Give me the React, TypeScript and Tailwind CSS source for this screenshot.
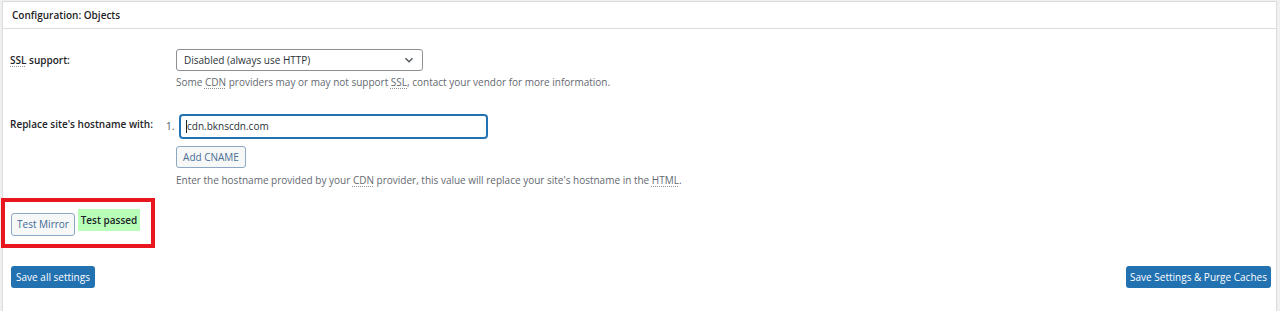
import React from "react";

const font = { fontFamily: '"Open Sans", "Noto Sans", Arial, sans-serif' };

function Abbr({ children }: { children: React.ReactNode }) {
  return (
    <span className="underline decoration-dotted decoration-[#8c8f94] underline-offset-2">
      {children}
    </span>
  );
}

export default function App() {
  return (
    <div
      className="relative w-full h-[311px] overflow-hidden bg-[#f0f0f1] pl-[2px] pr-[3px] pt-[1px] text-[10px] text-[#1d2327] whitespace-nowrap"
      style={font}
    >
      <div className="h-[340px] bg-white border border-[#dcdcde]">
        <div className="h-[27px] border-b border-[#dcdcde] pl-[9px] flex items-center">
          <span className="font-semibold text-[10px] text-[#1d2327]">Configuration: Objects</span>
        </div>
        <div className="pl-[7px] pt-[20px]">
          {/* SSL row */}
          <div className="flex">
            <div className="w-[166px] pt-[4px] font-semibold">
              <Abbr>SSL</Abbr> support:
            </div>
            <div>
              <div className="w-[247px] h-[22px] border border-[#8c8f94] rounded-[3px] bg-white flex items-center justify-between pl-[7px] pr-[8px]">
                <span className="text-[#2c3338]">Disabled (always use HTTP)</span>
                <svg width="10" height="10" viewBox="0 0 10 10" fill="none">
                  <path d="M1.5 3.2 L5 6.7 L8.5 3.2" stroke="#50575e" strokeWidth="1.4" />
                </svg>
              </div>
              <div className="mt-[4px] text-[#646970] leading-[14px]">
                Some <Abbr>CDN</Abbr> providers may or may not support <Abbr>SSL</Abbr>, contact your vendor for more information.
              </div>
            </div>
          </div>
          {/* hostname row */}
          <div className="flex mt-[26px]">
            <div className="w-[166px] pt-[2px] font-semibold">Replace site's hostname with:</div>
            <div className="-ml-[10px]">
              <div className="flex items-center">
                <span className="w-[14px] text-[#50575e]">1.</span>
                <div className="w-[307px] h-[23px] border border-[#2271b1] rounded-[3px] shadow-[0_0_0_1px_#2271b1] bg-white flex items-center pl-[5px]">
                  <span className="w-px h-[13px] bg-[#1d2327]" />
                  <span className="text-[#2c3338]">cdn.bknscdn.com</span>
                </div>
              </div>
              <div className="ml-[10px] mt-[8px]">
                <div className="w-[70px] h-[22px] border border-[#8ea8c3] rounded-[3px] bg-[#f6f7f7] flex items-center justify-center text-[#4a6f95]">
                  Add CNAME
                </div>
                <div className="mt-[5px] text-[#646970] leading-[14px]">
                  Enter the hostname provided by your <Abbr>CDN</Abbr> provider, this value will replace your site's hostname in the <Abbr>HTML</Abbr>.
                </div>
              </div>
            </div>
          </div>
          {/* test mirror */}
          <div className="flex items-start mt-[22px] pl-[1px]">
            <div className="mt-[4px] w-[64px] h-[23px] border border-[#8ea8c3] rounded-[3px] bg-[#f6f7f7] flex items-center justify-center text-[#3d6a96]">
              Test Mirror
            </div>
            <div className="ml-[3px] w-[62px] h-[22px] bg-[#b8ffb8] flex items-center justify-center font-semibold text-[#1d2327]">
              Test passed
            </div>
          </div>
          {/* save buttons */}
          <div className="flex justify-between mt-[30px] pl-[1px] pr-[5px]">
            <div className="w-[84px] h-[22px] rounded-[3px] bg-[#2271b1] text-white flex items-center justify-center">
              Save all settings
            </div>
            <div className="w-[145px] h-[22px] rounded-[3px] bg-[#2271b1] text-white flex items-center justify-center">
              Save Settings &amp; Purge Caches
            </div>
          </div>
        </div>
      </div>
      <div className="absolute left-[1px] top-[198px] w-[154px] h-[50px] border-[4px] border-[#e8161f]" />
    </div>
  );
}
